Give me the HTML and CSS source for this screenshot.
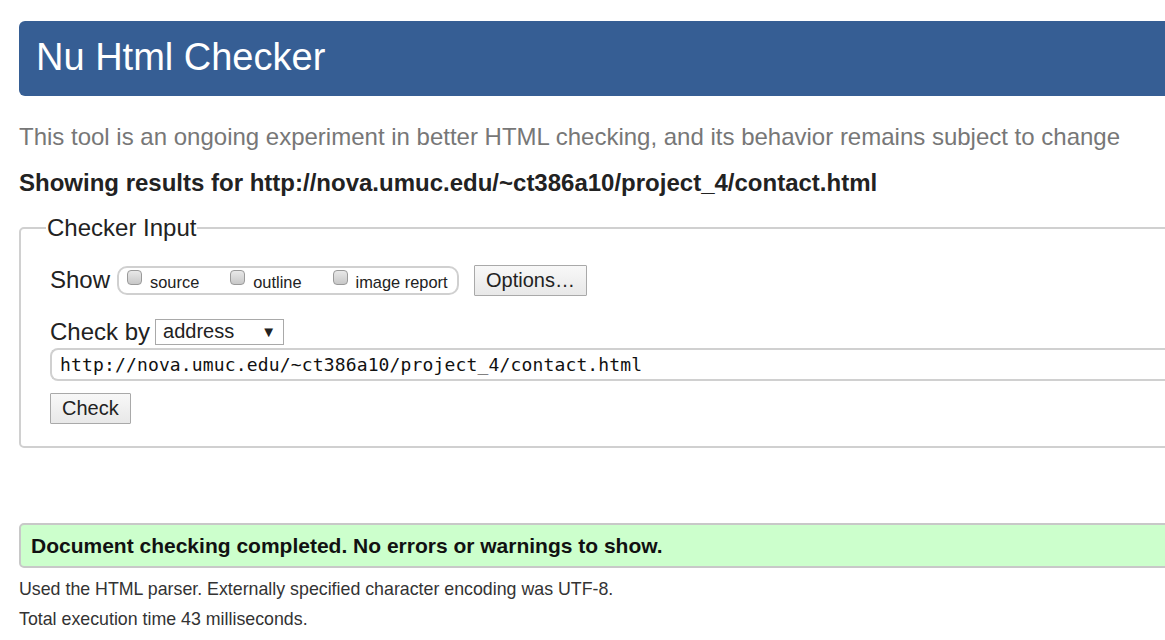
FILE: index.html
```html
<!DOCTYPE html>
<html lang="en">
<head>
<meta charset="utf-8">
<title>Nu Html Checker</title>
<link rel="stylesheet" href="styles.css">
</head>
<body>
<div class="page">
  <h1 class="banner">Nu Html Checker</h1>
  <p class="intro">This tool is an ongoing experiment in better HTML checking, and its behavior remains subject to change</p>
  <h2 class="results">Showing results for http://nova.umuc.edu/~ct386a10/project_4/contact.html</h2>
  <fieldset class="input-box">
    <legend class="legend">Checker Input</legend>
    <div class="row show-row">
      <span class="label">Show</span>
      <span class="pill">
        <label class="opt"><input type="checkbox" class="cb"><span>source</span></label>
        <label class="opt"><input type="checkbox" class="cb"><span>outline</span></label>
        <label class="opt"><input type="checkbox" class="cb"><span>image report</span></label>
      </span>
      <button class="btn options">Options…</button>
    </div>
    <div class="row by-row">
      <span class="label">Check by</span>
      <span class="select"><span>address</span><span class="arrow">▼</span></span>
    </div>
    <div class="url">http://nova.umuc.edu/~ct386a10/project_4/contact.html</div>
    <div class="row"><button class="btn check">Check</button></div>
  </fieldset>
  <div class="success">Document checking completed. No errors or warnings to show.</div>
  <p class="meta">Used the HTML parser. Externally specified character encoding was UTF-8.</p>
  <p class="meta">Total execution time 43 milliseconds.</p>
</div>
</body>
</html>
```
FILE: styles.css
```css
html, body {
  margin: 0;
  padding: 0;
  overflow: hidden;
  background: #fff;
}
body {
  font-family: "Liberation Sans", Arial, sans-serif;
  color: #222;
}
.page {
  padding: 21px 0 0 19px;
  width: 1200px;
  display: flex;
  flex-direction: column;
}
.banner {
  margin: 0;
  height: 75px;
  line-height: 73px;
  padding-left: 17px;
  background: #365e94;
  color: #fff;
  font-size: 38px;
  font-weight: normal;
  border-radius: 6px;
}
.intro {
  margin: 26px 0 0 0;
  font-size: 24px;
  line-height: 30px;
  color: #777;
}
.results {
  margin: 16px 0 0 0;
  font-size: 24px;
  line-height: 30px;
  font-weight: bold;
  color: #222;
}
.input-box {
  margin: 17px 0 0 0;
  border: 2px solid #d0d0d0;
  border-radius: 5px;
  padding: 23px 0 22px 29px;
  min-width: 0;
}
.legend {
  font-size: 24px;
  padding: 0 1px;
  margin-left: -4px;
  color: #222;
  line-height: 26px;
}
.row {
  display: flex;
  align-items: center;
}
.label {
  font-size: 24px;
  color: #222;
}
.show-row {
  height: 32px;
}
.pill {
  display: flex;
  align-items: center;
  margin-left: 7px;
  height: 25px;
  border: 2px solid #d0d0d0;
  border-radius: 10px;
  padding: 0 8px;
  width: 322px;
  box-sizing: content-box;
}
.opt {
  display: flex;
  align-items: center;
  font-size: 16.4px;
  color: #222;
  margin-right: 31px;
}
.opt:last-child { margin-right: 0; }
.cb {
  appearance: none;
  -webkit-appearance: none;
  width: 15px;
  height: 15px;
  margin: 0 8px 6px 0;
  border: 1px solid #9a9a9a;
  border-radius: 4px;
  background: linear-gradient(#e8e8e8, #c8c8c8);
}
.opt span { padding-top: 4px; }
.btn {
  font-family: "Liberation Sans", Arial, sans-serif;
  font-size: 20px;
  color: #222;
  background: linear-gradient(#f8f8f8, #e8e8e8);
  border: 1px solid #a9a9a9;
  border-radius: 1px;
  padding: 0 11px;
  height: 31px;
}
.options {
  margin-left: 15px;
}
.by-row {
  margin-top: 22px;
  height: 27px;
}
.select {
  display: flex;
  align-items: center;
  justify-content: space-between;
  margin-left: 5px;
  width: 113px;
  height: 24px;
  border: 1px solid #a9a9a9;
  padding: 0 7px 0 7px;
  font-size: 20px;
  background: #fff;
}
.arrow {
  font-size: 15px;
}
.url {
  margin-top: 3px;
  height: 29px;
  line-height: 29px;
  border: 2px solid #d0d0d0;
  border-radius: 8px 0 0 8px;
  border-right: none;
  padding-left: 8px;
  font-family: "DejaVu Sans Mono", "Liberation Mono", monospace;
  font-size: 18px;
  letter-spacing: 0.15px;
  color: #111;
}
.check {
  margin-top: 12px;
}
.success {
  margin-top: 75px;
  height: 41px;
  line-height: 41px;
  background: #ccffcc;
  border: 2px solid #c8c8c8;
  border-radius: 5px;
  padding-left: 10px;
  font-size: 21px;
  font-weight: bold;
  color: #111;
}
.meta {
  margin: 0;
  font-size: 17.8px;
  line-height: 30px;
  color: #333;
}
.success + .meta { margin-top: 6px; }
```
